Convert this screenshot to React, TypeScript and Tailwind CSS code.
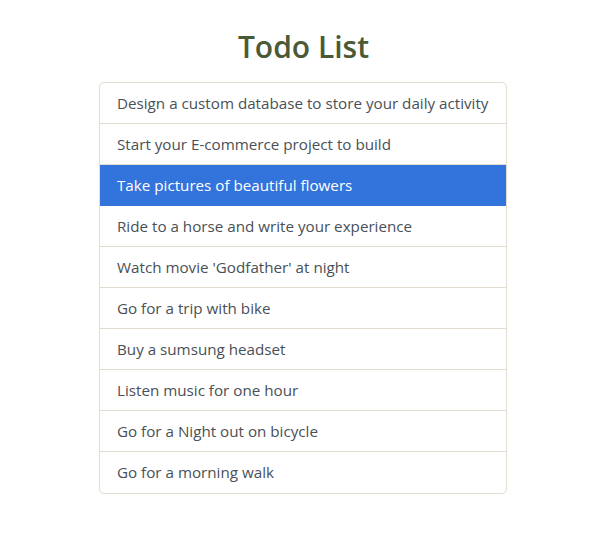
const todos = [
  "Design a custom database to store your daily activity",
  "Start your E-commerce project to build",
  "Take pictures of beautiful flowers",
  "Ride to a horse and write your experience",
  "Watch movie 'Godfather' at night",
  "Go for a trip with bike",
  "Buy a sumsung headset",
  "Listen music for one hour",
  "Go for a Night out on bicycle",
  "Go for a morning walk",
];

export default function App() {
  const activeIndex = 2;

  return (
    <div className="w-full min-h-[538px] bg-white pt-[25px] font-['Open_Sans',sans-serif]">
      <h1 className="text-center text-[30px] leading-[44px] font-semibold text-[#4b5a36]">Todo List</h1>
      <ul className="ml-[99px] mt-[13px] w-[408px] border border-[#e2ddd0] rounded-[5px] overflow-hidden">
        {todos.map((todo, i) => (
          <li
            key={i}
            className={
              i === activeIndex
                ? "h-[41px] flex items-center pl-[17px] text-[15.2px] bg-[#3273dc] text-white border-b border-[#3273dc]"
                : "h-[41px] flex items-center pl-[17px] text-[15.2px] text-[#495057] border-b border-[#e2ddd0] last:border-b-0"
            }
          >
            {todo}
          </li>
        ))}
      </ul>
    </div>
  );
}
